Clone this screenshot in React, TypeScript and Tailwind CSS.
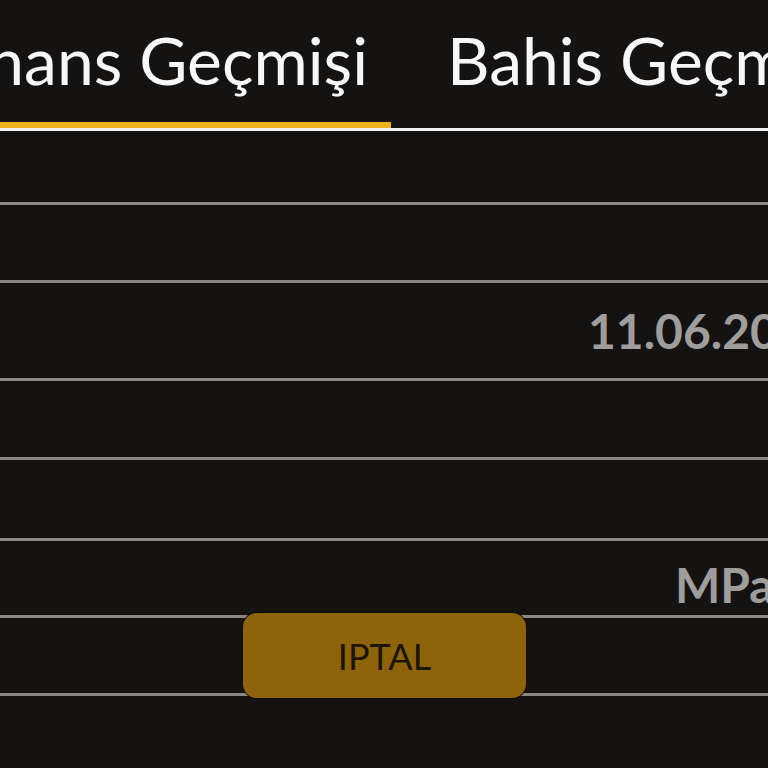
import React from "react";

export default function App() {
  const line = "border-b-[3px] border-[#8a8787]";
  return (
    <div className="w-[768px] h-[768px] overflow-hidden bg-[#151212] font-['Lato','Noto_Sans',sans-serif]">
      <div className="flex border-b-[3px] border-[#f2f2f2]">
        <div className="w-[391px] shrink-0 flex justify-end pr-[23px] pt-[24px] pb-[26px] border-b-[6px] border-[#f1b01e]">
          <span className="whitespace-nowrap text-[66px] leading-[72px] text-[#f7f7f7]">Finans Geçmişi</span>
        </div>
        <div className="pl-[56px] pt-[24px]">
          <span className="whitespace-nowrap text-[66px] leading-[72px] text-[#f7f7f7]">Bahis Geçmişi</span>
        </div>
      </div>
      <div className={`h-[74px] ${line}`} />
      <div className={`h-[78px] ${line}`} />
      <div className={`h-[98px] ${line} grid grid-cols-[588px_1fr] items-center`}>
        <div />
        <span className="whitespace-nowrap text-[48px] leading-[48px] font-bold text-[#a09d9d]">11.06.2024 14:32</span>
      </div>
      <div className={`h-[79px] ${line}`} />
      <div className={`h-[81px] ${line}`} />
      <div className={`h-[77px] ${line} grid grid-cols-[675px_1fr] pt-[20px]`}>
        <div />
        <span className="whitespace-nowrap text-[48px] leading-[48px] font-bold text-[#a09d9d]">MPapara</span>
      </div>
      <div className={`h-[78px] ${line} flex items-start pl-[243px]`}>
        <button className="-mt-[5px] h-[85px] w-[283px] rounded-[14px] bg-[#8d6409] ring-1 ring-[#0e0b0a] flex items-center justify-center text-[36px] leading-none text-[#1c1408]">
          IPTAL
        </button>
      </div>
    </div>
  );
}
